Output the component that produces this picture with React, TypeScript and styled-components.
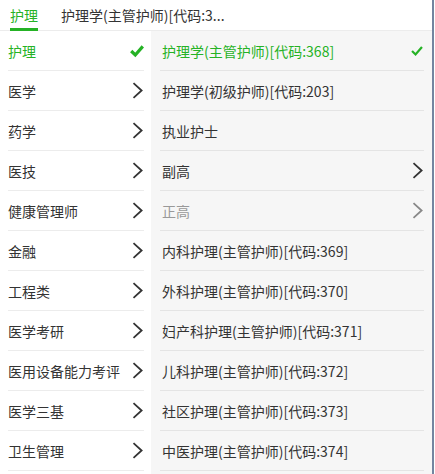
import styled, { createGlobalStyle } from 'styled-components'

const GlobalStyle = createGlobalStyle`
    html, body {
        margin: 0;
        padding: 0;
        background: #fff;
    }
    body {
        font-family: "Noto Sans CJK SC", "Noto Sans", sans-serif;
        color: #333;
    }
`

const green = '#25b225'

const StyledPicker = styled.div`
    width: 432px;
    height: 474px;
    border-right: 2px solid #7385a0;
    display: flex;
    flex-direction: column;
    overflow: hidden;
    background: #fff;
`

const StyledTabs = styled.div`
    display: flex;
    align-items: stretch;
    height: 30px;
    border-bottom: 1px solid #ececec;
    padding-left: 10px;
    gap: 23px;
    flex-shrink: 0;
`

const StyledTab = styled.div<{ $active?: boolean }>`
    display: flex;
    align-items: center;
    font-size: 14px;
    line-height: 1;
    padding-top: 1px;
    box-sizing: border-box;
    color: ${p => (p.$active ? green : '#333')};
    border-bottom: 3px solid ${p => (p.$active ? green : 'transparent')};
    margin-bottom: -1px;
`

const StyledColumns = styled.div`
    display: flex;
    flex: 1;
    min-height: 0;
`

const StyledLeft = styled.div`
    width: 151px;
    flex-shrink: 0;
    background: #fff;
    box-sizing: border-box;
    padding: 0 7px 0 8px;
`

const StyledRight = styled.div`
    flex: 1;
    background: #f6f6f6;
    padding: 0 8px 0 9px;
`

const StyledItem = styled.div<{ $active?: boolean; $muted?: boolean }>`
    display: flex;
    align-items: center;
    justify-content: space-between;
    height: 39px;
    border-bottom: 1px solid #ececec;
    font-size: 14px;
    color: ${p => (p.$active ? green : p.$muted ? '#999' : '#333')};
    white-space: nowrap;
`

const StyledRightItem = styled(StyledItem)`
    border-bottom-color: #e4e4e4;
    padding-left: 2px;
`

const StyledIcon = styled.span<{ $tone?: 'dark' | 'light' | 'green' }>`
    display: flex;
    align-items: center;
    justify-content: center;
    width: 14px;
    height: 20px;
    color: ${p => (p.$tone === 'green' ? green : p.$tone === 'light' ? '#888' : '#333')};
`

function Chevron(props: { light?: boolean }) {
    return (
        <StyledIcon $tone={props.light ? 'light' : 'dark'}>
            <svg width="11" height="17" viewBox="0 0 11 17">
                <path d="M1.5 1.2 L9.6 8.5 L1.5 15.8" fill="none" stroke="currentColor" strokeWidth="1.8" />
            </svg>
        </StyledIcon>
    )
}

function Check(props: { size: number; weight: number }) {
    return (
        <StyledIcon $tone="green">
            <svg width={props.size} height={props.size} viewBox="0 0 14 14">
                <path d="M1.2 7 L5.3 11 L12.8 2.4" fill="none" stroke="currentColor" strokeWidth={props.weight} />
            </svg>
        </StyledIcon>
    )
}

const categories = ['护理', '医学', '药学', '医技', '健康管理师', '金融', '工程类', '医学考研', '医用设备能力考评', '医学三基', '卫生管理']

interface SubItem {
    label: string
    active?: boolean
    more?: boolean
    muted?: boolean
}

const subItems: SubItem[] = [
    { label: '护理学(主管护师)[代码:368]', active: true },
    { label: '护理学(初级护师)[代码:203]' },
    { label: '执业护士' },
    { label: '副高', more: true },
    { label: '正高', more: true, muted: true },
    { label: '内科护理(主管护师)[代码:369]' },
    { label: '外科护理(主管护师)[代码:370]' },
    { label: '妇产科护理(主管护师)[代码:371]' },
    { label: '儿科护理(主管护师)[代码:372]' },
    { label: '社区护理(主管护师)[代码:373]' },
    { label: '中医护理(主管护师)[代码:374]' },
]

export default function App() {
    return (
        <>
            <GlobalStyle />
            <StyledPicker>
                <StyledTabs>
                    <StyledTab $active>护理</StyledTab>
                    <StyledTab>护理学(主管护师)[代码:3...</StyledTab>
                </StyledTabs>
                <StyledColumns>
                    <StyledLeft>
                        {categories.map((name, i) => (
                            <StyledItem key={name} $active={i === 0}>
                                <span>{name}</span>
                                {i === 0 ? <Check size={16} weight={3.2} /> : <Chevron />}
                            </StyledItem>
                        ))}
                    </StyledLeft>
                    <StyledRight>
                        {subItems.map(item => (
                            <StyledRightItem key={item.label} $active={item.active} $muted={item.muted}>
                                <span>{item.label}</span>
                                {item.active && <Check size={12} weight={2.6} />}
                                {item.more && <Chevron light={item.muted} />}
                            </StyledRightItem>
                        ))}
                    </StyledRight>
                </StyledColumns>
            </StyledPicker>
        </>
    )
}
